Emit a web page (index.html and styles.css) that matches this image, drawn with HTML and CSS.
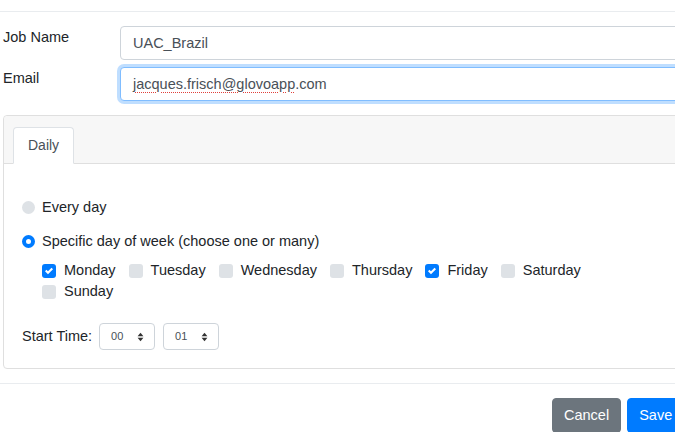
FILE: index.html
```html
<!DOCTYPE html>
<html lang="en">
<head>
<meta charset="utf-8">
<title>Job schedule</title>
<link rel="stylesheet" href="styles.css">
</head>
<body>
<div class="page">
  <div class="top-rule"></div>
  <div class="form">
    <div class="form-row">
      <label class="field-label">Job Name</label>
      <div class="form-control">UAC_Brazil</div>
    </div>
    <div class="form-row">
      <label class="field-label">Email</label>
      <div class="form-control focused"><span class="misspelled">jacques.frisch@glovoapp</span>.com</div>
    </div>
    <div class="card">
      <div class="card-header">
        <div class="tab active">Daily</div>
      </div>
      <div class="card-body">
        <div class="radio-row">
          <span class="radio"></span>
          <span class="opt-label">Every day</span>
        </div>
        <div class="radio-row second">
          <span class="radio checked"></span>
          <span class="opt-label">Specific day of week (choose one or many)</span>
        </div>
        <div class="days">
          <div class="day"><span class="checkbox checked"><svg viewBox="0 0 8 8" width="8" height="8"><path fill="#fff" d="M6.564.75l-3.59 3.612-1.538-1.55L0 4.26 2.974 7.25 8 2.193z"/></svg></span><span class="opt-label">Monday</span></div>
          <div class="day"><span class="checkbox"></span><span class="opt-label">Tuesday</span></div>
          <div class="day"><span class="checkbox"></span><span class="opt-label">Wednesday</span></div>
          <div class="day"><span class="checkbox"></span><span class="opt-label">Thursday</span></div>
          <div class="day"><span class="checkbox checked"><svg viewBox="0 0 8 8" width="8" height="8"><path fill="#fff" d="M6.564.75l-3.59 3.612-1.538-1.55L0 4.26 2.974 7.25 8 2.193z"/></svg></span><span class="opt-label">Friday</span></div>
          <div class="day"><span class="checkbox"></span><span class="opt-label">Saturday</span></div>
          <div class="day"><span class="checkbox"></span><span class="opt-label">Sunday</span></div>
        </div>
        <div class="time-row">
          <span class="time-label">Start Time:</span>
          <div class="select"><span>00</span><svg viewBox="0 0 8 12" width="7" height="10"><polygon points="4,1 7.5,5 0.5,5" fill="#333"/><polygon points="0.5,7 7.5,7 4,11" fill="#333"/></svg></div>
          <div class="select"><span>01</span><svg viewBox="0 0 8 12" width="7" height="10"><polygon points="4,1 7.5,5 0.5,5" fill="#333"/><polygon points="0.5,7 7.5,7 4,11" fill="#333"/></svg></div>
        </div>
      </div>
    </div>
  </div>
  <div class="footer">
    <button class="btn btn-secondary">Cancel</button>
    <button class="btn btn-primary">Save</button>
  </div>
</div>
</body>
</html>
```

FILE: styles.css
```css
html, body {
  margin: 0;
  padding: 0;
  background: #fff;
  overflow: hidden;
}
body {
  font-family: "Liberation Sans", Arial, sans-serif;
  font-size: 14px;
  line-height: 21px;
  color: #212529;
}
.page {
  width: 700px;
}
.top-rule {
  height: 11px;
  border-bottom: 1px solid #e9ecef;
}
.form {
  padding: 14px 0 0 3px;
}
.form-row {
  display: flex;
  align-items: flex-start;
  margin-bottom: 7px;
}
.field-label {
  width: 117px;
  flex: none;
  padding-top: 1px;
  font-size: 14.5px;
}
.form-control {
  flex: 1;
  height: 32px;
  line-height: 32px;
  border: 1px solid #ced4da;
  border-radius: 4px;
  padding: 0 12px;
  font-size: 14.5px;
  color: #495057;
  background: #fff;
}
.form-control.focused {
  border-color: #80bdff;
  box-shadow: 0 0 0 3px rgba(0, 123, 255, 0.25);
}
.misspelled {
  text-decoration: underline dotted #e0403a;
  text-decoration-thickness: 1px;
  text-underline-offset: 3px;
}
.card {
  margin-top: 14px;
  border: 1px solid #dfdfdf;
  border-radius: 4px;
  background: #fff;
}
.card-header {
  background: #f7f7f7;
  border-bottom: 1px solid #dfdfdf;
  padding: 11px 9px 0;
  display: flex;
  border-radius: 4px 4px 0 0;
}
.tab {
  padding: 7px 14px;
  border: 1px solid #dee2e6;
  border-bottom-color: #fff;
  border-radius: 4px 4px 0 0;
  background: #fff;
  color: #495057;
  margin-bottom: -1px;
  font-size: 14px;
}
.card-body {
  padding: 33px 18px 18px 17px;
}
.radio-row {
  display: flex;
  align-items: center;
  gap: 7px;
}
.radio-row.second {
  margin-top: 13px;
}
.radio {
  width: 13px;
  height: 13px;
  border-radius: 50%;
  background: #dee2e6;
  box-sizing: border-box;
  margin-left: 1px;
}
.radio.checked {
  background: #fff;
  border: 4px solid #007bff;
}
.opt-label {
  font-size: 14.5px;
}
.days {
  display: flex;
  flex-wrap: wrap;
  width: 600px;
  margin: 8px 0 0 21px;
}
.day {
  display: flex;
  align-items: center;
  gap: 8px;
  margin-right: 13px;
}
.checkbox {
  width: 14px;
  height: 14px;
  border-radius: 3px;
  background: #dee2e6;
  display: flex;
  align-items: center;
  justify-content: center;
}
.checkbox.checked {
  background: #007bff;
}
.time-row {
  display: flex;
  align-items: center;
  margin-top: 21px;
  margin-left: 1px;
}
.time-label {
  font-size: 14.5px;
  margin-right: 7px;
}
.select {
  width: 56px;
  height: 27px;
  box-sizing: border-box;
  border: 1px solid #ced4da;
  border-radius: 4px;
  display: flex;
  align-items: center;
  justify-content: space-between;
  padding: 0 10px 0 11px;
  margin-right: 8px;
  font-size: 11px;
  color: #495057;
}
.footer {
  margin-top: 14px;
  border-top: 1px solid #e9ecef;
  padding: 14px 0 0 552px;
  display: flex;
  gap: 6px;
}
.btn {
  font-family: "Liberation Sans", Arial, sans-serif;
  font-size: 14.5px;
  line-height: 21px;
  padding: 6px 11px;
  border: 1px solid transparent;
  border-radius: 4px;
  color: #fff;
}
.btn-secondary {
  background: #6c757d;
  border-color: #6c757d;
}
.btn-primary {
  background: #007bff;
  border-color: #007bff;
}
```
